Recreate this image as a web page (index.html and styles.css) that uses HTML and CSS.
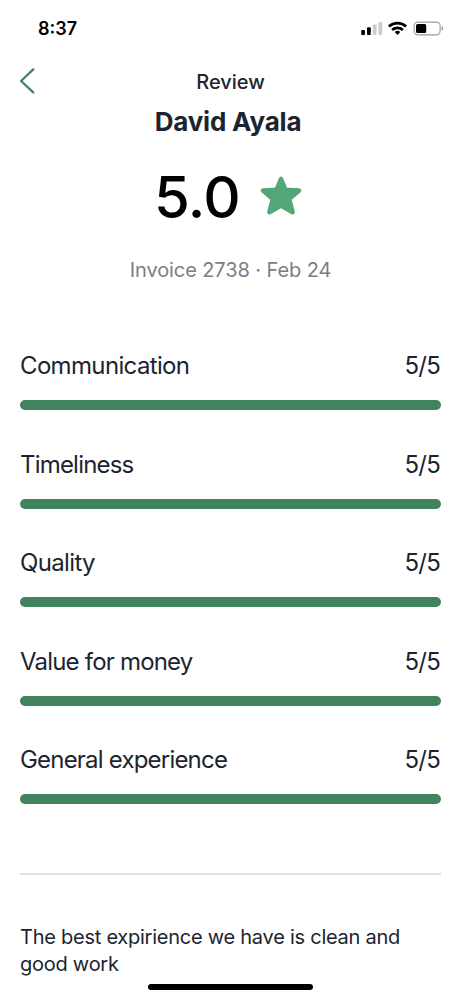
FILE: index.html
```html
<!DOCTYPE html>
<html lang="en">
<head>
<meta charset="utf-8">
<title>Review</title>
<link rel="stylesheet" href="styles.css">
</head>
<body>
<div class="screen">
  <header class="status">
    <span class="time">8:37</span>
    <svg class="indicators" width="84" height="20" viewBox="0 0 84 20">
      <g fill="#000"><rect x="1.2" y="11" width="3.8" height="5" rx="1"/><rect x="7" y="8.3" width="3.8" height="7.7" rx="1"/></g>
      <g fill="#ccc"><rect x="12.8" y="5.5" width="3.8" height="10.5" rx="1"/><rect x="18.4" y="3" width="3.8" height="13" rx="1"/></g>
      <g fill="none" stroke="#000" stroke-width="2.7"><path d="M28.9 7.6a12.6 12.6 0 0 1 17.2 0"/><path d="M32.1 11a7.9 7.9 0 0 1 10.8 0"/></g>
      <path d="M34.7 13a4.2 4.2 0 0 1 5.6 0l-2.8 3.1z"/>
      <rect x="54.1" y="3.1" width="26" height="12.8" rx="3.8" fill="none" stroke="#9b9b9b" stroke-width="1.1"/>
      <rect x="56" y="5" width="10.2" height="9" rx="1.6"/>
      <path d="M81.6 7.3c2 .7 2 3.7 0 4.4z" fill="#8c8c8c"/>
    </svg>
  </header>
  <nav class="nav">
    <svg class="back" width="18" height="28" viewBox="0 0 18 28"><path d="M13.2 2.4 1.1 14 13.2 25.4" fill="none" stroke="#43835f" stroke-width="2.3" stroke-linecap="round" stroke-linejoin="round"/></svg>
    <span class="title">Review</span>
  </nav>
  <h1 class="name">David Ayala</h1>
  <div class="score">
    <span class="score-value">5.0</span>
    <svg class="star" width="44" height="42" viewBox="0 0 44 42"><path d="M22 4 26.4 14.8 40 15.6 30.2 24 33.6 37.2 22 30.4 10.4 37.2 13.8 24 4 15.6 17.6 14.8z" fill="#53a678" stroke="#53a678" stroke-width="4.6" stroke-linejoin="round"/></svg>
  </div>
  <p class="invoice">Invoice 2738 · Feb 24</p>
  <section class="ratings">
    <div class="rating"><div class="row"><span class="label">Communication</span><span class="mark">5/5</span></div><div class="bar"></div></div>
    <div class="rating"><div class="row"><span class="label label-tight">Timeliness</span><span class="mark">5/5</span></div><div class="bar"></div></div>
    <div class="rating"><div class="row"><span class="label">Quality</span><span class="mark">5/5</span></div><div class="bar"></div></div>
    <div class="rating"><div class="row"><span class="label label-tight">Value for money</span><span class="mark">5/5</span></div><div class="bar"></div></div>
    <div class="rating"><div class="row"><span class="label label-tight">General experience</span><span class="mark">5/5</span></div><div class="bar"></div></div>
  </section>
  <p class="comment">The best expirience we have is clean and good work</p>
  <div class="home"></div>
</div>
</body>
</html>
```
FILE: styles.css
```css
* { box-sizing: border-box; }
body { margin: 0; background: #fff; }
.screen { width: 461px; height: 1000px; padding: 17px 20px 0; overflow: hidden; position: relative; font-family: Inter, "Liberation Sans", sans-serif; color: #1b2530; }
.status { display: flex; justify-content: space-between; height: 22px; padding: 0 0 0 18px; margin-right: -3px; }
.time { font-size: 18px; line-height: 24px; font-weight: 600; color: #000; }
.indicators { display: block; margin-top: 2px; }
.nav { display: grid; grid-template-columns: 18px 1fr 18px; height: 28px; margin-top: 28px; }
.back { display: block; }
.title { text-align: center; font-size: 20px; line-height: 31px; font-weight: 500; }
.name { margin: 11px 5px 0 0; height: 31px; text-align: center; font-size: 26px; line-height: 32px; font-weight: 700; letter-spacing: -0.2px; }
.score { display: flex; justify-content: center; align-items: flex-start; gap: 19px; height: 70px; margin: 25px 4px 0 0; }
.score-value { font-size: 58px; line-height: 71px; font-weight: 500; color: #000; letter-spacing: -0.6px; }
.star { display: block; margin-top: 13px; }
.invoice { margin: 26px 0 0; text-align: center; font-size: 20px; line-height: 24px; letter-spacing: -0.1px; color: #7d7e85; }
.ratings { display: grid; row-gap: 39.5px; margin-top: 69px; }
.rating { height: 59px; }
.row { display: flex; justify-content: space-between; height: 49px; font-size: 24px; line-height: 30px; }
.label { letter-spacing: -0.65px; }
.label-tight { letter-spacing: -0.8px; }
.mark { letter-spacing: -0.8px; margin-right: 1px; }
.bar { height: 10px; border-radius: 5px; background: #40835c; }
.comment { margin: 69px 0 0; padding-top: 49px; border-top: 2px solid #dedfe0; font-size: 20px; line-height: 27.3px; letter-spacing: -0.25px; }
.home { position: absolute; left: 148px; top: 984px; width: 165px; height: 6px; border-radius: 3px; background: #000; }
```
